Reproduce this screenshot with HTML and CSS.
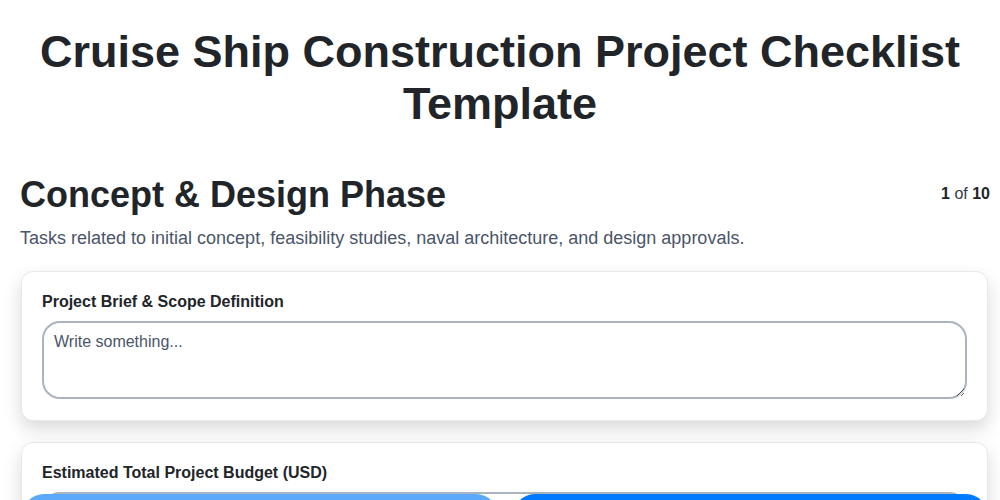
FILE: index.html
```html
<!DOCTYPE html>
<html lang="en">
<head>
<meta charset="utf-8">
<title>Cruise Ship Construction Project Checklist Template</title>
<link rel="stylesheet" href="styles.css">
</head>
<body>
<div class="page">
  <header class="header">
    <h1 class="title">Cruise Ship Construction Project Checklist Template</h1>
  </header>
  <section class="step">
    <div class="step-head">
      <h2 class="step-title">Concept &amp; Design Phase</h2>
      <div class="step-count"><b>1</b> of <b>10</b></div>
    </div>
    <p class="step-desc">Tasks related to initial concept, feasibility studies, naval architecture, and design approvals.</p>
    <div class="card">
      <label class="field-label" for="brief">Project Brief &amp; Scope Definition</label>
      <textarea id="brief" class="field-area" placeholder="Write something..."></textarea>
    </div>
    <div class="card">
      <label class="field-label" for="budget">Estimated Total Project Budget (USD)</label>
      <input id="budget" class="field-input" type="text" placeholder="Write something...">
    </div>
  </section>
</div>
<div class="nav">
  <button class="btn btn-prev" disabled>Previous</button>
  <button class="btn btn-next">Next</button>
</div>
</body>
</html>
```
FILE: styles.css
```css
html, body {
  margin: 0;
  padding: 0;
  background: #ffffff;
}
body {
  font-family: "Liberation Sans", Arial, sans-serif;
  color: #212529;
}
.page {
  padding: 26px 0 80px 0;
}
.header {
  padding: 0 20px;
}
.title {
  margin: 0;
  text-align: center;
  font-size: 45px;
  line-height: 1.15;
  font-weight: 700;
  color: #212529;
}
.step {
  margin-top: 43px;
  padding: 0 10px 0 20px;
}
.step-head {
  display: flex;
  justify-content: space-between;
  align-items: center;
}
.step-title {
  margin: 0;
  font-size: 36px;
  line-height: 1.2;
  font-weight: 700;
}
.step-count {
  font-size: 16px;
  color: #333b45;
}
.step-count b {
  color: #212529;
}
.step-desc {
  margin: 9px 0 19px 0;
  font-size: 18px;
  line-height: 1.5;
  color: #4a5568;
}
.card {
  margin: 0 2px 21px 1px;
  padding: 20px 20px 21px 20px;
  border: 1px solid #e6e8ee;
  border-radius: 12px;
  background: #ffffff;
  box-shadow: 0 8px 18px rgba(0, 0, 0, 0.15);
}
.field-label {
  display: block;
  font-size: 16px;
  font-weight: 700;
  line-height: 19px;
  margin-bottom: 10px;
  color: #212529;
}
.field-area,
.field-input {
  display: block;
  box-sizing: border-box;
  width: 100%;
  border: 2px solid #aab4be;
  border-radius: 18px;
  padding: 10px 10px 9px 10px;
  font-family: "Liberation Sans", Arial, sans-serif;
  font-size: 16px;
  color: #212529;
  background: #ffffff;
}
.field-area {
  height: 78px;
}
.field-input {
  height: 46px;
}
.field-area::placeholder,
.field-input::placeholder {
  color: #4a5568;
  opacity: 1;
}
.nav {
  position: fixed;
  top: 494px;
  left: 22px;
  right: 12px;
  display: flex;
  gap: 15px;
}
.btn {
  flex: 1;
  height: 48px;
  border: none;
  border-radius: 22px;
  font-family: "Liberation Sans", Arial, sans-serif;
  font-size: 16px;
  font-weight: 700;
  color: #ffffff;
}
.btn-prev {
  background: #5aa9fa;
}
.btn-next {
  background: #007bff;
}
```
